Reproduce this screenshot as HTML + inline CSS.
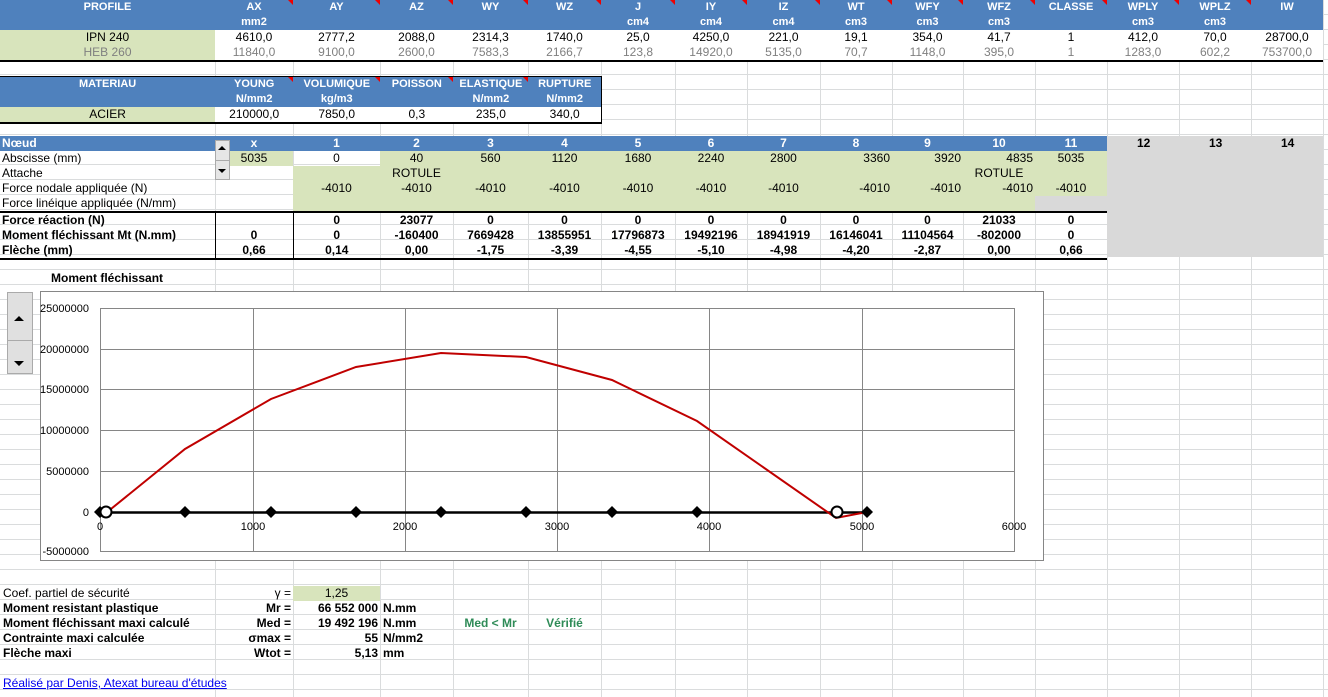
<!DOCTYPE html>
<html><head><meta charset="utf-8"><style>
*{margin:0;padding:0;box-sizing:border-box}
body{width:1328px;height:697px;position:relative;overflow:hidden;background:#fff;font-family:"Liberation Sans",Arial,sans-serif;font-size:12px;color:#000}
.grid{position:absolute;left:0;top:0;width:1328px;height:697px;background-image:repeating-linear-gradient(to bottom,transparent 0,transparent 14px,#dadcdd 14px,#dadcdd 15px)}
.v{position:absolute;top:0;width:1px;height:697px;background:#dadcdd}
table{position:absolute;border-collapse:collapse;table-layout:fixed}
td{height:15px;line-height:15px;padding:0 2px;white-space:nowrap;overflow:visible;text-align:center;font-size:12px}
.h td{background:#4f81bd;color:#fff;font-weight:bold;font-size:11px;position:relative}
.g{background:#d8e4bc}
.w{background:#fff}
.gr{background:#d9d9d9}
.gy td{color:#808080}
.b td{font-weight:bold}
.l{text-align:left}
.r{text-align:right}
.t::after{content:"";position:absolute;right:0;top:0;border-top:5px solid #e00;border-left:5px solid transparent}
.abs{position:absolute;white-space:nowrap}
</style></head><body>
<div class="grid"></div>
<div class="v" style="left:215px"></div><div class="v" style="left:293px"></div><div class="v" style="left:380px"></div><div class="v" style="left:453px"></div><div class="v" style="left:528px"></div><div class="v" style="left:601px"></div><div class="v" style="left:675px"></div><div class="v" style="left:747px"></div><div class="v" style="left:820px"></div><div class="v" style="left:892px"></div><div class="v" style="left:963px"></div><div class="v" style="left:1035px"></div><div class="v" style="left:1107px"></div><div class="v" style="left:1179px"></div><div class="v" style="left:1251px"></div><div class="v" style="left:1323px"></div>

<table style="left:0;top:0;width:1323px;border-bottom:2px solid #000">
<colgroup><col style="width:215px"><col style="width:78px"><col style="width:87px"><col style="width:73px"><col style="width:75px"><col style="width:73px"><col style="width:74px"><col style="width:72px"><col style="width:73px"><col style="width:72px"><col style="width:71px"><col style="width:72px"><col style="width:72px"><col style="width:72px"><col style="width:72px"><col style="width:72px"></colgroup>
<tr class="h"><td>PROFILE</td><td class="t">AX</td><td class="t">AY</td><td class="t">AZ</td><td class="t">WY</td><td class="t">WZ</td><td class="t">J</td><td class="t">IY</td><td class="t">IZ</td><td class="t">WT</td><td class="t">WFY</td><td class="t">WFZ</td><td class="t">CLASSE</td><td class="t">WPLY</td><td class="t">WPLZ</td><td>IW</td></tr>
<tr class="h"><td></td><td>mm2</td><td></td><td></td><td></td><td></td><td>cm4</td><td>cm4</td><td>cm4</td><td>cm3</td><td>cm3</td><td>cm3</td><td></td><td>cm3</td><td>cm3</td><td></td></tr>
<tr class="w"><td class="g">IPN 240</td><td>4610,0</td><td>2777,2</td><td>2088,0</td><td>2314,3</td><td>1740,0</td><td>25,0</td><td>4250,0</td><td>221,0</td><td>19,1</td><td>354,0</td><td>41,7</td><td>1</td><td>412,0</td><td>70,0</td><td>28700,0</td></tr>
<tr class="w gy"><td class="g">HEB 260</td><td>11840,0</td><td>9100,0</td><td>2600,0</td><td>7583,3</td><td>2166,7</td><td>123,8</td><td>14920,0</td><td>5135,0</td><td>70,7</td><td>1148,0</td><td>395,0</td><td>1</td><td>1283,0</td><td>602,2</td><td>753700,0</td></tr>
</table>

<table style="left:0;top:76px;width:602px;border:1px solid #000;border-left:none;border-bottom:2px solid #000">
<colgroup><col style="width:215px"><col style="width:78px"><col style="width:87px"><col style="width:73px"><col style="width:75px"><col style="width:73px"></colgroup>
<tr class="h"><td>MATERIAU</td><td class="t">YOUNG</td><td class="t">VOLUMIQUE</td><td class="t">POISSON</td><td class="t">ELASTIQUE</td><td>RUPTURE</td></tr>
<tr class="h"><td></td><td>N/mm2</td><td>kg/m3</td><td></td><td>N/mm2</td><td>N/mm2</td></tr>
<tr class="w"><td class="g">ACIER</td><td>210000,0</td><td>7850,0</td><td>0,3</td><td>235,0</td><td>340,0</td></tr>
</table>

<div class="abs gr" style="left:1107px;top:136px;width:216px;height:121px"></div>
<div class="abs" style="left:1107px;top:136px;width:216px;font-weight:bold;line-height:15px"><span style="position:absolute;left:30px;width:16px">12</span><span style="position:absolute;left:102px">13</span><span style="position:absolute;left:174px">14</span></div>
<table style="left:0;top:136px;width:1107px;border-bottom:2px solid #000">
<colgroup><col style="width:215px"><col style="width:78px"><col style="width:87px"><col style="width:73px"><col style="width:75px"><col style="width:73px"><col style="width:74px"><col style="width:72px"><col style="width:73px"><col style="width:72px"><col style="width:71px"><col style="width:72px"></colgroup>
<tr class="h"><td class="l" style="font-size:12px">Nœud</td><td style="font-size:12px">x</td><td style="font-size:12px">1</td><td style="font-size:12px">2</td><td style="font-size:12px">3</td><td style="font-size:12px">4</td><td style="font-size:12px">5</td><td style="font-size:12px">6</td><td style="font-size:12px">7</td><td style="font-size:12px">8</td><td style="font-size:12px">9</td><td style="font-size:12px">10</td><td style="font-size:12px">11</td></tr>
<tr><td class="l">Abscisse (mm)</td><td class="g">5035</td><td>0</td><td class="g">40</td><td class="g">560</td><td class="g">1120</td><td class="g">1680</td><td class="g">2240</td><td class="g">2800</td><td class="g r">3360</td><td class="g r">3920</td><td class="g r">4835</td><td class="g">5035</td></tr>
<tr><td class="l">Attache</td><td></td><td class="g"></td><td class="g">ROTULE</td><td class="g"></td><td class="g"></td><td class="g"></td><td class="g"></td><td class="g"></td><td class="g"></td><td class="g"></td><td class="g">ROTULE</td><td class="g"></td></tr>
<tr><td class="l">Force nodale appliquée (N)</td><td></td><td class="g">-4010</td><td class="g">-4010</td><td class="g">-4010</td><td class="g">-4010</td><td class="g">-4010</td><td class="g">-4010</td><td class="g">-4010</td><td class="g r">-4010</td><td class="g r">-4010</td><td class="g r">-4010</td><td class="g">-4010</td></tr>
<tr><td class="l">Force linéique appliquée (N/mm)</td><td></td><td class="g"></td><td class="g"></td><td class="g"></td><td class="g"></td><td class="g"></td><td class="g"></td><td class="g"></td><td class="g"></td><td class="g"></td><td class="g"></td><td class="gr"></td></tr>
<tr class="b" style="border-top:2px solid #000"><td class="l" style="border-right:1px solid #000">Force réaction (N)</td><td style="border-right:1px solid #000"></td><td>0</td><td>23077</td><td>0</td><td>0</td><td>0</td><td>0</td><td>0</td><td>0</td><td>0</td><td>21033</td><td>0</td></tr>
<tr class="b"><td class="l" style="border-right:1px solid #000">Moment fléchissant Mt (N.mm)</td><td style="border-right:1px solid #000">0</td><td>0</td><td>-160400</td><td>7669428</td><td>13855951</td><td>17796873</td><td>19492196</td><td>18941919</td><td>16146041</td><td>11104564</td><td>-802000</td><td>0</td></tr>
<tr class="b"><td class="l" style="border-right:1px solid #000">Flèche (mm)</td><td style="border-right:1px solid #000">0,66</td><td>0,14</td><td>0,00</td><td>-1,75</td><td>-3,39</td><td>-4,55</td><td>-5,10</td><td>-4,98</td><td>-4,20</td><td>-2,87</td><td>0,00</td><td>0,66</td></tr>
</table>
<div class="abs" style="left:215px;top:140px;width:15px;height:40px;background:#e6e6e6;border:1px solid #aaa"></div>
<div class="abs" style="left:215px;top:160px;width:15px;height:1px;background:#aaa"></div>
<div class="abs" style="left:218px;top:146px;border-left:4px solid transparent;border-right:4px solid transparent;border-bottom:4px solid #000"></div>
<div class="abs" style="left:218px;top:169px;border-left:4px solid transparent;border-right:4px solid transparent;border-top:4px solid #000"></div>

<div class="abs" style="left:51px;top:271px;font-weight:bold;font-size:12px;line-height:15px">Moment fléchissant</div>

<svg class="abs" style="left:0;top:0" width="1328" height="697" font-family="Liberation Sans,Arial,sans-serif" font-size="11">
<rect x="40.5" y="291.5" width="1003" height="269" fill="#fff" stroke="#868686"/>
<g stroke="#868686" stroke-width="1">
<line x1="100" y1="308.5" x2="1014" y2="308.5"/><line x1="100" y1="349.5" x2="1014" y2="349.5"/><line x1="100" y1="389.5" x2="1014" y2="389.5"/><line x1="100" y1="430.5" x2="1014" y2="430.5"/><line x1="100" y1="471.5" x2="1014" y2="471.5"/><line x1="100" y1="551.5" x2="1014" y2="551.5"/>
<line x1="100.5" y1="308" x2="100.5" y2="552"/><line x1="253.5" y1="308" x2="253.5" y2="552"/><line x1="405.5" y1="308" x2="405.5" y2="552"/><line x1="557.5" y1="308" x2="557.5" y2="552"/><line x1="709.5" y1="308" x2="709.5" y2="552"/><line x1="862.5" y1="308" x2="862.5" y2="552"/><line x1="1014.5" y1="308" x2="1014.5" y2="552"/>
</g>
<g text-anchor="end"><text x="89" y="312">25000000</text><text x="89" y="353">20000000</text><text x="89" y="393">15000000</text><text x="89" y="434">10000000</text><text x="89" y="475">5000000</text><text x="89" y="516">0</text><text x="89" y="555">-5000000</text></g>
<g text-anchor="middle"><text x="100" y="530">0</text><text x="253" y="530">1000</text><text x="405" y="530">2000</text><text x="557" y="530">3000</text><text x="709" y="530">4000</text><text x="862" y="530">5000</text><text x="1014" y="530">6000</text></g>
<line x1="100" y1="512.5" x2="867" y2="512.5" stroke="#000" stroke-width="2.5"/>
<polyline fill="none" stroke="#c00000" stroke-width="2" points="106,513 185,449 271,399 356,367 441,353 526,357 612,380 697,421 836,518 867,512"/>
<g fill="#000">
<path d="M100 506l6 6-6 6-6-6z"/><path d="M185 506l6 6-6 6-6-6z"/><path d="M271 506l6 6-6 6-6-6z"/><path d="M356 506l6 6-6 6-6-6z"/><path d="M441 506l6 6-6 6-6-6z"/><path d="M526 506l6 6-6 6-6-6z"/><path d="M612 506l6 6-6 6-6-6z"/><path d="M697 506l6 6-6 6-6-6z"/><path d="M867 506l6 6-6 6-6-6z"/>
</g>
<circle cx="106" cy="512" r="5.5" fill="#fff" stroke="#000" stroke-width="2"/>
<circle cx="837" cy="512" r="5.5" fill="#fff" stroke="#000" stroke-width="2"/>
<rect x="7.5" y="292.5" width="25" height="81" fill="#e0e0e0" stroke="#aaa"/>
<line x1="8" y1="340.5" x2="32" y2="340.5" stroke="#aaa"/>
<path d="M14 321h10l-5-5z M14 361h10l-5 5z" fill="#000"/>
</svg>

<div class="abs g" style="left:293px;top:586px;width:87px;height:15px"></div>
<div class="abs" style="left:3px;top:586px;line-height:15px">Coef. partiel de sécurité</div>
<div class="abs" style="left:3px;top:601px;line-height:15px;font-weight:bold">Moment resistant plastique</div>
<div class="abs" style="left:3px;top:616px;line-height:15px;font-weight:bold">Moment fléchissant maxi calculé</div>
<div class="abs" style="left:3px;top:631px;line-height:15px;font-weight:bold">Contrainte maxi calculée</div>
<div class="abs" style="left:3px;top:646px;line-height:15px;font-weight:bold">Flèche maxi</div>
<div class="abs" style="left:215px;top:586px;width:76px;text-align:right;line-height:15px">γ =</div>
<div class="abs" style="left:215px;top:601px;width:76px;text-align:right;line-height:15px;font-weight:bold">Mr =</div>
<div class="abs" style="left:215px;top:616px;width:76px;text-align:right;line-height:15px;font-weight:bold">Med =</div>
<div class="abs" style="left:215px;top:631px;width:76px;text-align:right;line-height:15px;font-weight:bold">σmax =</div>
<div class="abs" style="left:215px;top:646px;width:76px;text-align:right;line-height:15px;font-weight:bold">Wtot =</div>
<div class="abs" style="left:293px;top:586px;width:87px;text-align:center;line-height:15px">1,25</div>
<div class="abs" style="left:293px;top:601px;width:85px;text-align:right;line-height:15px;font-weight:bold">66 552 000</div>
<div class="abs" style="left:293px;top:616px;width:85px;text-align:right;line-height:15px;font-weight:bold">19 492 196</div>
<div class="abs" style="left:293px;top:631px;width:85px;text-align:right;line-height:15px;font-weight:bold">55</div>
<div class="abs" style="left:293px;top:646px;width:85px;text-align:right;line-height:15px;font-weight:bold">5,13</div>
<div class="abs" style="left:383px;top:601px;line-height:15px;font-weight:bold">N.mm</div>
<div class="abs" style="left:383px;top:616px;line-height:15px;font-weight:bold">N.mm</div>
<div class="abs" style="left:383px;top:631px;line-height:15px;font-weight:bold">N/mm2</div>
<div class="abs" style="left:383px;top:646px;line-height:15px;font-weight:bold">mm</div>
<div class="abs" style="left:453px;top:616px;width:75px;text-align:center;line-height:15px;font-weight:bold;color:#2e8b57">Med &lt; Mr</div>
<div class="abs" style="left:528px;top:616px;width:73px;text-align:center;line-height:15px;font-weight:bold;color:#2e8b57">Vérifié</div>
<div class="abs" style="left:3px;top:676px;line-height:15px;color:#0000ee;text-decoration:underline">Réalisé par Denis, Atexat bureau d'études</div>
</body></html>
